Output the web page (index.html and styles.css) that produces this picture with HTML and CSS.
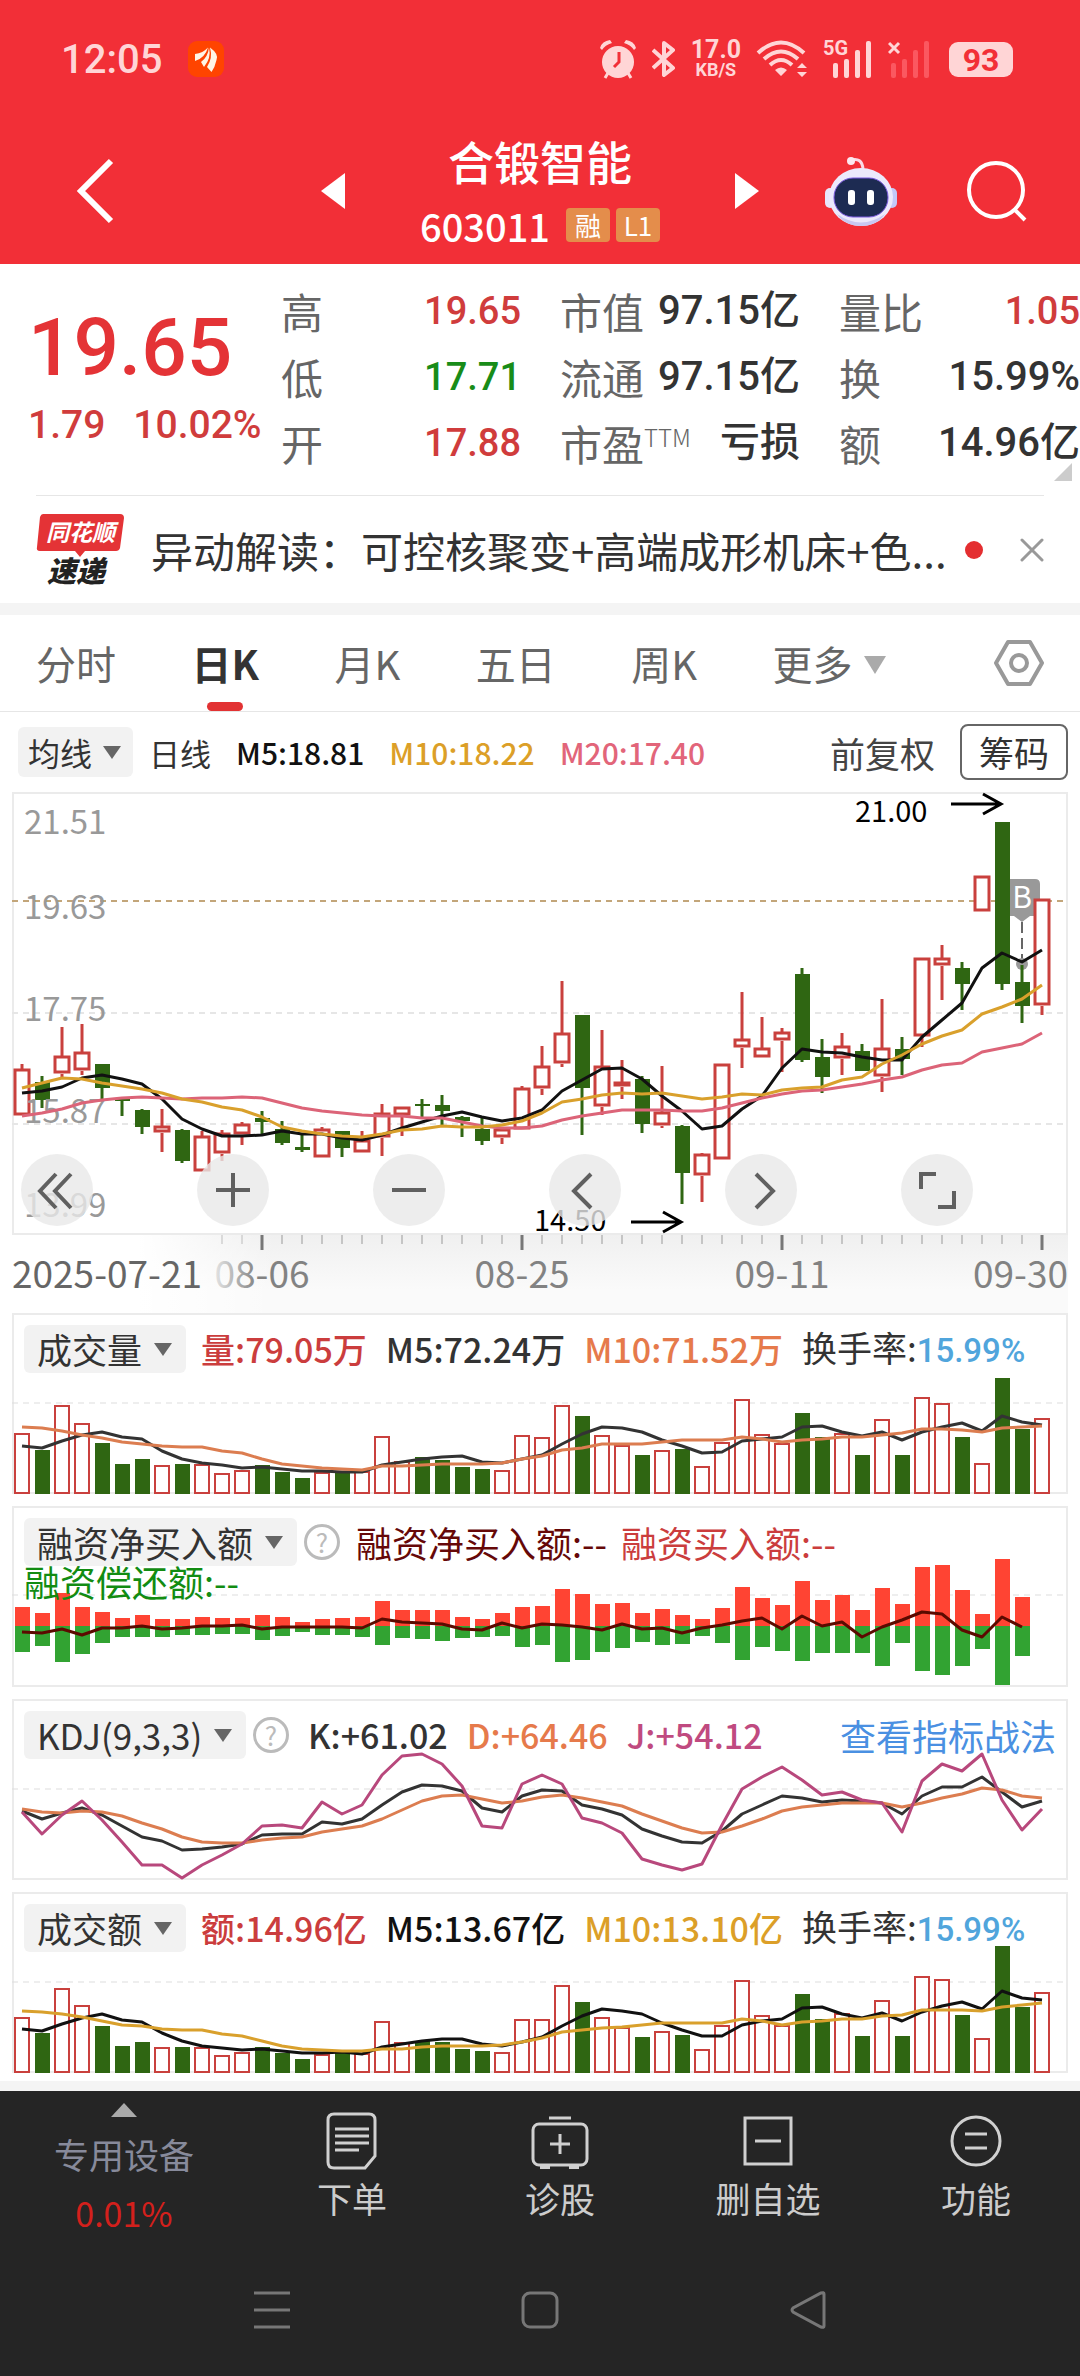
FILE: index.html
```html
<!DOCTYPE html>
<html lang="zh-CN">
<head>
<meta charset="utf-8">
<meta name="viewport" content="width=device-width, initial-scale=1">
<title>合锻智能 603011</title>
<link rel="stylesheet" href="styles.css">
</head>
<body>
<header class="top">
  <div class="status">
    <span class="clock">12:05</span>
    <svg class="app-icon" width="36" height="36" viewBox="0 0 36 36"><rect width="36" height="36" rx="9" fill="#ff4400"/><g fill="#fff6e6"><path d="M7 13Q15 12 20 6.500Q17 17 7 20Z"/><path d="M13 21Q20 16 21 6.500Q23.500 17 16 26Z"/><path d="M19 26Q25 17 22 6.500Q31 13 28.500 19Q27 26 23.500 31Z"/></g></svg>
    <div class="status-right">
      <svg width="38" height="40" viewBox="0 0 38 40" fill="#ffd5d6"><circle cx="19" cy="23" r="16"/><path d="M1 9Q3 2 11 1L13 4Q6 6 3 11ZM37 9Q35 2 27 1L25 4Q32 6 35 11Z"/><path d="M9 34L6 39M29 34L32 39" stroke="#ffd5d6" stroke-width="3"/><path d="M20 13V23L15 28" fill="none" stroke="#f22f37" stroke-width="3"/></svg>
      <svg width="24" height="40" viewBox="0 0 24 40" fill="none" stroke="#ffd5d6" stroke-width="4"><path d="M1 11L21 29L12 36V4L21 11L1 29" stroke-linejoin="round"/></svg>
      <span class="speed"><b>17.0</b><b class="unit">KB/S</b></span>
      <svg width="52" height="40" viewBox="0 0 52 40" fill="none" stroke="#ffd5d6" stroke-width="4"><path d="M2 14Q25-7 48 14M8 20Q25 5 42 20M14 26Q25 16 36 26"/><path d="M25 37L19 31Q25 26 31 31ZM46 24L51 29H41ZM46 38L51 33H41Z" fill="#ffd5d6" stroke="none"/></svg>
      <svg class="signal" width="50" height="40" viewBox="0 0 50 40" fill="#ffd5d6"><text x="0" y="16" class="net">5G</text><rect x="10" y="24" width="5" height="15" rx="2"/><rect x="21" y="20" width="5" height="19" rx="2"/><rect x="32" y="11" width="5" height="28" rx="2"/><rect x="43" y="2" width="5" height="37" rx="2"/></svg>
      <svg width="42" height="40" viewBox="0 0 42 40" fill="#fb5860"><path d="M1 4L11 14M11 4L1 14" stroke="#ffd5d6" stroke-width="3"/><rect x="3" y="24" width="5" height="15" rx="2"/><rect x="14" y="20" width="5" height="19" rx="2"/><rect x="25" y="11" width="5" height="28" rx="2"/><rect x="36" y="2" width="5" height="37" rx="2"/></svg>
      <span class="battery">93</span>
    </div>
  </div>
  <div class="titlebar">
    <button class="icon-btn back" aria-label="返回"><svg width="40" height="66" viewBox="0 0 40 66" fill="none" stroke="#fff" stroke-width="6"><path d="M36 3L6 33L36 63"/></svg></button>
    <button class="icon-btn" aria-label="上一只"><svg width="24" height="36" viewBox="0 0 24 36" fill="#fff"><path d="M24 0V36L0 18Z"/></svg></button>
    <div class="stock">
      <h1>合锻智能</h1>
      <div class="code"><span>603011</span><i class="badge">融</i><i class="badge">L1</i></div>
    </div>
    <button class="icon-btn" aria-label="下一只"><svg width="24" height="36" viewBox="0 0 24 36" fill="#fff"><path d="M0 0V36L24 18Z"/></svg></button>
    <button class="icon-btn" aria-label="智能助手"><svg width="72" height="72" viewBox="0 0 72 72"><path d="M26 5Q37 2 38 14" fill="none" stroke="#fbd9e6" stroke-width="3"/><circle cx="26" cy="6" r="4" fill="#fce8f0"/><rect x="0" y="33" width="10" height="20" rx="5" fill="#e8e6fb"/><rect x="62" y="33" width="10" height="20" rx="5" fill="#c3c8f8"/><ellipse cx="36" cy="42" rx="32" ry="29" fill="#ece9fb"/><path d="M12 59Q36 76 60 59Q52 71 36 71T12 59Z" fill="#c9c8f2"/><rect x="9" y="23" width="54" height="39" rx="19" fill="#1d2b52" stroke="#7c5ae0" stroke-width="1"/><rect x="23" y="35" width="7" height="15" rx="3" fill="#fff"/><rect x="42" y="35" width="7" height="15" rx="3" fill="#fff"/></svg></button>
    <button class="icon-btn search" aria-label="搜索"><svg width="62" height="62" viewBox="0 0 62 62" fill="none" stroke="#fff" stroke-width="4"><circle cx="30" cy="30" r="27"/><path d="M48 49L59 60"/></svg></button>
  </div>
</header>

<main>
  <section class="quote">
    <div class="price">
      <strong>19.65</strong>
      <div class="change"><span>1.79</span><span>10.02%</span></div>
    </div>
    <dl class="stats">
      <div><dt>高</dt><dd class="up">19.65</dd></div>
      <div><dt>低</dt><dd class="down">17.71</dd></div>
      <div><dt>开</dt><dd class="up">17.88</dd></div>
    </dl>
    <dl class="stats">
      <div><dt>市值</dt><dd>97.15亿</dd></div>
      <div><dt>流通</dt><dd>97.15亿</dd></div>
      <div><dt>市盈<small>TTM</small></dt><dd>亏损</dd></div>
    </dl>
    <dl class="stats last">
      <div><dt>量比</dt><dd class="up">1.05</dd></div>
      <div><dt>换</dt><dd>15.99%</dd></div>
      <div><dt>额</dt><dd>14.96亿</dd></div>
    </dl>
  </section>

  <section class="news">
    <svg class="logo" width="90" height="76" viewBox="0 0 90 76"><path d="M7 2H84Q88 2 88 6L84 36Q83 39 80 39H49L44 45L39 39H4Q0 39 1 35L4 5Q5 2 7 2Z" fill="#e43336"/><text x="10" y="29" class="logo-a">同花顺</text><text x="11" y="70" class="logo-b">速递</text></svg>
    <a href="#" class="headline">异动解读：可控核聚变+高端成形机床+色...</a>
    <span class="dot"></span>
    <button class="icon-btn" aria-label="关闭"><svg width="24" height="24" viewBox="0 0 24 24" stroke="#999" stroke-width="3" stroke-linecap="round"><path d="M2 2L22 22M22 2L2 22"/></svg></button>
  </section>

  <nav class="tabs">
    <button>分时</button>
    <button class="active">日K</button>
    <button>月K</button>
    <button>五日</button>
    <button>周K</button>
    <button class="more">更多</button>
    <button class="gear" aria-label="设置"><svg width="50" height="46" viewBox="0 0 50 46" fill="none" stroke="#999" stroke-width="4" stroke-linejoin="round"><path d="M14 2H36L48 23L36 44H14L2 23Z"/><circle cx="25" cy="23" r="8"/></svg></button>
  </nav>

  <div class="ma-row">
    <label class="pill"><select aria-label="主图指标"><option>均线</option></select></label>
    <span class="cycle">日线</span>
    <span class="c-black">M5:18.81</span>
    <span class="c-gold">M10:18.22</span>
    <span class="c-pink">M20:17.40</span>
    <button class="adjust">前复权</button>
    <button class="chips">筹码</button>
  </div>

  <section class="panel main-panel">
    <svg id="kline" class="layer" viewBox="0 0 1056 443"></svg>
    <div class="controls">
      <button aria-label="最左"><svg viewBox="0 0 72 72"><path d="M35 20L19 37L35 54M50 20L34 37L50 54"/></svg></button>
      <button aria-label="放大"><svg viewBox="0 0 72 72"><path d="M19 36H53M36 19V53"/></svg></button>
      <button aria-label="缩小"><svg viewBox="0 0 72 72"><path d="M19 36H53"/></svg></button>
      <button aria-label="左移"><svg viewBox="0 0 72 72"><path d="M42 20L25 37L42 54"/></svg></button>
      <button aria-label="右移"><svg viewBox="0 0 72 72"><path d="M31 20L48 37L31 54"/></svg></button>
      <button aria-label="全屏"><svg viewBox="0 0 72 72"><path d="M20 35V20H35M53 37V53H37"/></svg></button>
    </div>
  </section>
  <svg id="dates" class="dates" viewBox="0 0 1056 78"></svg>

  <section class="panel">
    <svg id="volume" class="layer" viewBox="0 0 1056 181"></svg>
    <div class="legend">
      <label class="pill"><select aria-label="副图一"><option>成交量</option></select></label>
      <span class="c-red">量:79.05万</span>
      <span class="c-dark">M5:72.24万</span>
      <span class="c-orange">M10:71.52万</span>
      <span class="rate">换手率:<b>15.99%</b></span>
    </div>
  </section>

  <section class="panel">
    <svg id="margin" class="layer" viewBox="0 0 1056 181"></svg>
    <div class="legend wrap">
      <label class="pill"><select aria-label="副图二"><option>融资净买入额</option></select></label>
      <button class="help">?</button>
      <span class="c-wine">融资净买入额:--</span>
      <span class="c-red">融资买入额:--</span>
      <span class="c-green">融资偿还额:--</span>
    </div>
  </section>

  <section class="panel">
    <svg id="kdj" class="layer" viewBox="0 0 1056 181"></svg>
    <div class="legend">
      <label class="pill"><select aria-label="副图三"><option>KDJ(9,3,3)</option></select></label>
      <button class="help">?</button>
      <span class="c-dark">K:+61.02</span>
      <span class="c-orange">D:+64.46</span>
      <span class="c-purple">J:+54.12</span>
      <a href="#" class="guide">查看指标战法</a>
    </div>
  </section>

  <section class="panel">
    <svg id="amount" class="layer" viewBox="0 0 1056 181"></svg>
    <div class="legend">
      <label class="pill"><select aria-label="副图四"><option>成交额</option></select></label>
      <span class="c-red">额:14.96亿</span>
      <span class="c-black">M5:13.67亿</span>
      <span class="c-gold">M10:13.10亿</span>
      <span class="rate">换手率:<b>15.99%</b></span>
    </div>
  </section>
</main>

<footer class="bottom">
  <nav class="actions">
    <button class="sector"><i class="tri-up"></i><span>专用设备</span><em>0.01%</em></button>
    <button><svg width="60" height="60" viewBox="0 0 60 60"><path d="M12 3H47Q53 3 53 9V45L43 57H12Q6 57 6 51V9Q6 3 12 3Z"/><path d="M13 18H47M13 25H47M13 32H47M13 39H37"/></svg><span>下单</span></button>
    <button><svg width="60" height="60" viewBox="0 0 60 60"><rect x="3" y="13" width="54" height="41" rx="6"/><path d="M19 7H41M30 23V43M20 33H40"/><path d="M10 56H20M39 56H49" stroke-width="4"/></svg><span>诊股</span></button>
    <button><svg width="60" height="60" viewBox="0 0 60 60"><rect x="7" y="7" width="46" height="46"/><path d="M17 30H43"/></svg><span>删自选</span></button>
    <button><svg width="60" height="60" viewBox="0 0 60 60"><circle cx="30" cy="30" r="24"/><path d="M19 23H41M19 37H41"/></svg><span>功能</span></button>
  </nav>
  <nav class="system">
    <button class="icon-btn" aria-label="最近任务"><svg width="38" height="38" viewBox="0 0 38 38"><path d="M1 2H37M1 19H37M1 36H37"/></svg></button>
    <button class="icon-btn" aria-label="主屏幕"><svg width="38" height="38" viewBox="0 0 38 38"><rect x="2" y="2" width="34" height="34" rx="7"/></svg></button>
    <button class="icon-btn" aria-label="后退"><svg width="38" height="38" viewBox="0 0 38 38"><path d="M35 3V35Q35 37 32 36L4 21Q2 19 4 17L32 2Q35 1 35 3Z"/></svg></button>
  </nav>
</footer>
<script src="chart.js"></script>
</body>
</html>
```

FILE: styles.css
```css
* { box-sizing: border-box; }

body {
  margin: 0;
  background: #fff;
  color: #333;
  font-family: "Noto Sans CJK SC", "Noto Sans", sans-serif;
  font-weight: 400;
}

button {
  margin: 0;
  padding: 0;
  border: 0;
  background: none;
  color: inherit;
  font: inherit;
}

a { text-decoration: none; color: inherit; }
svg { display: block; flex: none; }
h1, dl, dd { margin: 0; }
i, em { font-style: normal; }
.icon-btn { display: flex; align-items: center; justify-content: center; }

/* Status bar and title */
.top { background: #f22f37; color: #fff; height: 264px; }

.status {
  display: flex;
  align-items: center;
  height: 118px;
  padding: 0 67px 0 61px;
  color: #ffd5d6;
  font-family: Roboto, sans-serif;
}
.clock { font-size: 40px; font-weight: 500; margin-right: 26px; }
.status-right { display: flex; align-items: center; gap: 15px; margin-left: auto; }
.speed { display: flex; flex-direction: column; align-items: center; font-size: 25px; line-height: 22px; }
.speed b { font-weight: 700; }
.speed .unit { font-size: 18px; line-height: 18px; }
.signal, .logo { overflow: visible; }
.net { font: 700 20px Roboto, sans-serif; }
.battery {
  width: 64px;
  height: 35px;
  margin-left: 4px;
  border-radius: 9px;
  background: #ffd5d6;
  color: #f22f37;
  font-size: 32px;
  font-weight: 700;
  line-height: 36px;
  text-align: center;
}

.titlebar {
  display: grid;
  grid-template-columns: 265fr 136fr 278fr 136fr 92fr 173fr;
  align-items: center;
  height: 146px;
}
.back { justify-self: start; margin-left: 75px; }
.search { justify-self: start; margin-left: 59px; }
.stock { text-align: center; white-space: nowrap; }
.stock h1 { font-size: 46px; font-weight: 500; line-height: 68px; }
.code { display: flex; align-items: center; justify-content: center; gap: 6px; height: 62px; font-size: 38px; font-weight: 500; }
.code span { margin-right: 10px; }
.badge {
  min-width: 44px;
  border-radius: 4px;
  background: #e48d4b;
  font-size: 26px;
  font-weight: 400;
  line-height: 34px;
  text-align: center;
}

/* Quote summary */
.quote {
  position: relative;
  display: grid;
  grid-template-columns: 281fr 279fr 279fr 241fr;
  height: 231px;
  padding-top: 14px;
}
.quote::after {
  content: "";
  position: absolute;
  right: 8px;
  bottom: 14px;
  border: 9px solid #ccc;
  border-top-color: transparent;
  border-left-color: transparent;
}
.price { padding: 24px 0 0 28px; color: #e43336; font-family: Roboto, sans-serif; white-space: nowrap; }
.price strong { display: block; font-size: 80px; font-weight: 500; line-height: 92px; }
.change { display: flex; gap: 28px; margin-top: 8px; color: #d03c3c; font-size: 39px; font-weight: 500; line-height: 46px; }
.stats { padding-right: 39px; }
.stats.last { padding-right: 0; }
.stats div { display: flex; justify-content: space-between; height: 66px; line-height: 66px; white-space: nowrap; }
.stats dt { color: #666; font-size: 42px; }
.stats dd { font-family: Roboto, "Noto Sans CJK SC", sans-serif; font-size: 40px; font-weight: 500; }
.stats small { font-size: 24px; font-weight: 300; line-height: 24px; vertical-align: 14px; }
.stats .up { color: #d03c3c; font-size: 38px; }
.stats .down { color: #188c18; font-size: 38px; }

/* News line */
.news {
  display: flex;
  align-items: center;
  height: 108px;
  margin: 0 36px;
  border-top: 1px solid #e6e6e6;
}
.headline { flex: 1; margin-left: 25px; font-size: 42px; line-height: 60px; white-space: nowrap; }
.dot { flex: none; width: 18px; height: 18px; margin: 0 37px 0 15px; border-radius: 50%; background: #e42e30; }
.logo-a { font: italic 700 23px "Noto Sans CJK SC", sans-serif; fill: #fff; }
.logo-b { font: italic 900 29px "Noto Sans CJK SC", sans-serif; fill: #222; }

/* Period tabs */
.tabs {
  display: flex;
  align-items: center;
  justify-content: space-between;
  height: 109px;
  padding: 0 36px;
  border-top: 12px solid #f4f4f4;
  border-bottom: 1px solid #e6e6e6;
  color: #666;
  font-size: 40px;
}
.tabs button { position: relative; height: 96px; line-height: 96px; }
.tabs .active { color: #333; font-weight: 700; }
.tabs .active::after {
  content: "";
  position: absolute;
  left: 50%;
  bottom: 0;
  width: 36px;
  height: 9px;
  margin-left: -18px;
  border-radius: 5px;
  background: #e23233;
}
.more::after {
  content: "";
  display: inline-block;
  margin: 0 0 6px 12px;
  border: 11px solid transparent;
  border-top: 18px solid #aaa;
  border-bottom: 0;
}
.tabs .gear { margin-left: 32px; }

/* Moving-average row */
.ma-row {
  display: flex;
  align-items: center;
  height: 80px;
  padding: 0 12px 0 18px;
  gap: 25px;
  font-size: 30px;
  white-space: nowrap;
}
.ma-row span { font-weight: 500; }
.ma-row .cycle { margin-left: -9px; font-size: 31px; font-weight: 400; }
.adjust { margin-left: auto; color: #444; font-size: 35px; }
.chips { width: 108px; height: 56px; border: 2px solid #666; border-radius: 8px; font-size: 35px; line-height: 50px; }

.pill {
  display: flex;
  align-items: center;
  height: 48px;
  padding: 0 14px 0 13px;
  gap: 11px;
  border-radius: 6px;
  background: #f2f2f2;
}
.pill select {
  appearance: none;
  padding: 0;
  border: 0;
  background: none;
  color: #333;
  font: inherit;
  line-height: 48px;
}
.pill::after {
  content: "";
  border: 9px solid transparent;
  border-top: 13px solid #666;
  border-bottom: 0;
}
.ma-row .pill { height: 50px; padding: 0 12px 0 10px; font-size: 32px; gap: 10px; }

/* Chart panels: drawing and legend share one cell */
.panel {
  display: grid;
  margin: 0 12px 12px;
  box-shadow: inset 0 0 0 2px #ebebeb;
}
.main-panel { margin-bottom: 0; }
.panel > * { grid-area: 1 / 1; min-width: 0; }
.layer { width: 100%; height: auto; }
.layer text, .dates text { font-family: "Noto Sans CJK SC", sans-serif; }
.dates { width: calc(100% - 24px); height: auto; margin: 0 12px; background: linear-gradient(90deg, #fff 12%, rgba(255, 255, 255, 0) 25%), linear-gradient(#f0f0f0, #fafafa 70%); }

.controls {
  display: flex;
  justify-content: space-between;
  align-self: end;
  z-index: 1;
  padding: 0 95px 9px 9px;
}
.controls button { width: 72px; height: 72px; border-radius: 50%; background: rgba(232, 232, 232, .8); }
.controls svg { width: 72px; height: 72px; fill: none; stroke: #606060; stroke-width: 4; }

.legend {
  display: flex;
  align-items: center;
  align-self: start;
  z-index: 1;
  padding: 12px 12px 0;
  gap: 19px;
  font-size: 34px;
  line-height: 36px;
  white-space: nowrap;
}
.legend span { font-weight: 500; }
.legend .pill + span { margin-left: -4px; }
.legend .pill select { font-size: 35px; }
.legend.wrap { flex-wrap: wrap; gap: 0 14px; line-height: 30px; }
.legend.wrap span, .legend.wrap select { font-size: 36px; }
.legend.wrap span { font-weight: 400; }
.legend .rate { color: #333; font-size: 35px; font-weight: 400; }
.rate b { color: #50a5dc; font-family: Roboto, sans-serif; font-size: 33px; font-weight: 500; }
.help { width: 36px; height: 36px; margin-left: -12px; border: 3px solid #bbb; border-radius: 50%; color: #bbb; font-size: 26px; line-height: 30px; }
.wrap .help { margin: 0 2px 0 -7px; }
.guide { margin-left: auto; color: #4a90e2; font-size: 36px; }

.c-black { color: #111; }
.c-dark { color: #333; }
.c-gold { color: #dc9f28; }
.c-pink { color: #e2657a; }
.c-red { color: #cb3d3d; }
.c-orange { color: #e67a4b; }
.c-wine { color: #660808; }
.c-green { color: #128c12; }
.c-purple { color: #c04a80; }

/* Bottom bar */
.bottom { min-height: 295px; margin-top: -4px; border-top: 10px solid #f4f4f4; background: #252525; color: #ccc; }
.actions { display: grid; grid-template-columns: 248fr 208fr 208fr 208fr 208fr; height: 170px; }
.actions button { display: flex; flex-direction: column; align-items: center; padding-top: 20px; gap: 5px; font-size: 35px; line-height: 44px; }
.actions svg { fill: none; stroke: #d0d0d0; stroke-width: 3; }
.actions .sector { padding-top: 12px; gap: 15px; color: #878a9b; }
.tri-up { border: 13px solid transparent; border-bottom: 14px solid #aaa; border-top: 0; }
.sector em { color: #d3201c; font-size: 34px; }
.system { display: flex; justify-content: center; gap: 230px; padding-top: 30px; }
.system svg { fill: none; stroke: #777; stroke-width: 3; }
```

FILE: chart.js
```js
const NS = "http://www.w3.org/2000/svg";
const RED = "#c9403d", GREEN = "#2f6612";
const x = i => 10 + 20 * i;

function add(svg, name, attrs, text) {
  const el = document.createElementNS(NS, name);
  for (const key in attrs) el.setAttribute(key, attrs[key]);
  if (text) el.textContent = text;
  svg.appendChild(el);
}
const line = (svg, ys, color) => add(svg, "polyline", {
  points: ys.map((y, i) => x(i) + "," + y).join(" "), fill: "none", stroke: color, "stroke-width": 3, "stroke-linejoin": "round"
});
const grid = (svg, y, color = "#ddd", width = 1) => add(svg, "path", {
  d: `M0 ${y}H1052`, stroke: color, "stroke-width": width, "stroke-dasharray": "6 5"
});
const label = (svg, px, py, size, fill, text, anchor = "start") => add(svg, "text", {
  x: px, y: py, "font-size": size, fill, "text-anchor": anchor
}, text);

// One letter per trading day: r closes up, g closes down
const days = "rgrrgggrgrrrgggrgrrrggggrrrrgrrgrgrrrrrggrgrgrrgrggr".split("");

// high, body top, body bottom, low
const candles = [
  [272,277,324,324],[284,290,308,316],[235,264,282,285],[232,260,279,283],[272,272,296,307],[305,307,309,324],
  [317,318,335,342],[317,334,341,360],[337,338,369,371],[339,344,380,380],[338,341,362,369],[330,332,343,353],
  [319,326,330,344],[329,337,351,353],[341,355,358,360],[335,337,366,366],[339,339,356,365],[339,348,361,361],
  [312,321,346,364],[315,315,324,344],[307,312,314,325],[303,313,319,334],[324,325,329,345],[326,337,349,353],
  [336,337,346,352],[294,296,338,338],[254,274,297,303],[189,241,272,275],[223,223,296,343],[238,274,315,323],
  [268,290,295,307],[284,287,332,341],[274,320,334,336],[333,334,381,412],[361,362,384,410],[272,272,368,368],
  [200,247,256,276],[225,256,266,266],[236,240,249,280],[176,182,268,270],[247,265,285,301],[241,254,267,283],
  [252,259,279,279],[207,256,285,300],[245,257,267,283],[166,166,245,255],[153,166,174,208],[170,176,192,218],
  [84,84,120,120],[30,30,192,198],[173,190,214,231],[107,107,214,223]
];

const k = document.getElementById("kline");
grid(k, 221, "#e6e6e6", 2);
grid(k, 332, "#e6e6e6", 2);
grid(k, 109, "#c3a67a", 2);
add(k, "path", { d: "M1001 87H1023Q1028 87 1028 92V124H1018L1010 130L1002 124H997V87Z", fill: "#999" });
label(k, 1010, 116, 30, "#fff", "B", "middle");
add(k, "path", { d: "M1010 130V168", stroke: "#666", "stroke-width": 2, "stroke-dasharray": "11 5" });
add(k, "circle", { cx: 1010, cy: 172, r: 6, fill: "#999" });
candles.forEach(([high, top, bottom, low], i) => {
  const up = days[i] === "r", color = up ? RED : GREEN;
  add(k, "path", { d: `M${x(i)} ${high}V${top}M${x(i)} ${bottom}V${low}`, stroke: color, "stroke-width": 3 });
  if (up) add(k, "rect", { x: x(i) - 7, y: top + 1, width: 14, height: Math.max(2, bottom - top - 3), fill: "#fff", stroke: color, "stroke-width": 3 });
  else add(k, "rect", { x: x(i) - 7, y: top, width: 15, height: bottom - top, fill: color });
});
[["21.51", 42], ["19.63", 127], ["17.75", 229], ["15.87", 331], ["13.99", 425]].forEach(([t, y]) => label(k, 12, y, 33, "#999", t));
line(k, [301,299,295,286,283,287,292,307,327,337,344,344,343,339,342,342,346,348,343,336,330,324,320,325,329,326,318,299,288,277,276,287,304,319,337,334,317,304,276,257,260,261,265,268,268,245,228,211,176,161,170,158], "#111");
line(k, [324,321,317,311,308,306,305,306,307,306,306,305,306,311,316,319,321,323,324,324,326,326,330,334,336,336,334,328,324,321,318,318,318,319,319,316,311,306,302,299,298,295,292,288,285,278,273,271,260,256,252,241], "#dc6478");
line(k, [296,291,286,287,291,294,297,301,307,310,315,318,325,335,339,342,344,345,342,338,337,334,335,335,333,329,321,310,307,303,301,302,301,304,307,305,302,303,298,296,295,288,285,272,263,252,244,238,222,215,207,193], "#d9a02c");
label(k, 843, 30, 29, "#000", "21.00");
label(k, 522, 439, 29, "#000", "14.50");
add(k, "path", { d: "M939 12H988M971 2L989 12L971 22M619 430H668M651 420L669 430L651 440", fill: "none", stroke: "#000", "stroke-width": 3 });

// Date axis, fading out behind the pinned start date
const d = document.getElementById("dates");
for (let i = 10; i < 52; i++) {
  const major = i % 13 === 12;
  add(d, "path", { d: `M${x(i)} 0V${major ? 15 : 9}`, stroke: major ? "#777" : "#999", "stroke-width": major ? 3 : 1, opacity: i < 12 ? .6 : 1 });
}
label(d, 0, 53, 37, "#666", "2025-07-21");
const fade = document.createElementNS(NS, "linearGradient");
fade.id = "fade";
d.appendChild(fade);
add(fade, "stop", { offset: 0, "stop-color": "#e4e4e4" });
add(fade, "stop", { offset: .45, "stop-color": "#828282" });
label(d, 250, 53, 37, "url(#fade)", "08-06", "middle");
label(d, 510, 53, 37, "#828282", "08-25", "middle");
label(d, 770, 53, 37, "#828282", "09-11", "middle");
label(d, 1056, 53, 37, "#828282", "09-30", "end");

function bars(id, heights, ma5, ma10, dark, warm) {
  const svg = document.getElementById(id);
  grid(svg, 90);
  heights.forEach((h, i) => {
    if (days[i] === "r") add(svg, "rect", { x: x(i) - 7, y: 182 - h, width: 14, height: h - 2, fill: "#fff", stroke: RED, "stroke-width": 2 });
    else add(svg, "rect", { x: x(i) - 7, y: 181 - h, width: 15, height: h, fill: GREEN });
  });
  line(svg, ma5, dark);
  line(svg, ma10, warm);
}
bars("volume",
  [61,44,89,71,51,30,35,29,30,30,21,24,29,22,16,22,23,23,58,33,37,34,27,25,24,59,57,89,78,59,49,39,44,45,28,52,95,60,51,81,57,61,39,75,39,97,91,57,31,116,65,76],
  [133,135,128,122,119,124,126,138,146,150,152,155,154,156,158,158,159,159,152,149,146,144,143,149,150,146,142,131,121,114,115,119,127,133,140,139,128,126,124,114,113,119,123,119,127,119,114,110,118,103,109,112],
  [114,115,118,122,125,129,131,133,134,134,138,140,146,151,153,155,156,157,153,153,152,151,151,151,150,146,143,137,135,131,131,131,129,127,127,127,124,126,129,127,126,124,124,122,120,116,116,117,119,115,114,113],
  "#333", "#dc7d50");
bars("amount",
  [56,40,85,68,47,27,31,26,26,26,18,21,26,20,14,19,20,20,52,31,32,31,24,22,21,54,54,88,71,56,46,36,42,38,24,48,93,58,48,79,54,60,37,73,37,97,94,58,35,127,66,81],
  [137,139,132,126,122,128,130,141,149,154,156,158,157,159,161,161,160,162,155,152,149,147,147,152,154,150,145,134,124,117,119,122,131,138,144,144,133,129,127,116,115,122,126,121,129,120,114,110,117,99,106,108],
  [119,120,122,125,129,133,134,137,138,138,142,144,149,154,157,158,159,159,157,157,155,154,154,154,153,150,146,140,138,136,135,133,131,131,131,131,127,129,133,130,129,127,127,124,123,118,118,118,119,115,113,111],
  "#111", "#d9a02c");

const m = document.getElementById("margin");
grid(m, 89);
const bought = [19,13,33,19,14,8,11,7,7,9,8,8,11,9,4,7,8,9,25,16,16,16,9,7,13,19,20,37,32,22,23,13,17,11,7,18,39,28,21,45,26,31,16,38,22,59,61,36,12,67,29];
const repaid = [26,20,36,28,17,11,11,11,9,9,8,8,14,10,6,9,9,11,19,12,13,15,12,11,10,21,19,36,34,26,22,16,19,18,10,17,34,21,25,35,27,27,27,40,17,45,49,40,23,59,30];
bought.forEach((h, i) => {
  add(m, "rect", { x: x(i) - 7, y: 120 - h, width: 15, height: h, fill: "#ff4433" });
  add(m, "rect", { x: x(i) - 7, y: 120, width: 15, height: repaid[i], fill: "#32a332" });
});
line(m, [126,127,123,129,122,122,120,123,122,120,120,119,123,121,121,121,121,122,113,116,117,118,123,124,117,122,118,119,121,124,118,123,122,127,122,119,115,112,123,110,120,116,131,121,114,106,108,124,131,111,121], "#5c0a00");

const j = document.getElementById("kdj");
grid(j, 90);
line(j, [112,120,114,109,116,127,138,142,151,150,148,145,136,135,135,123,125,120,106,93,86,87,92,109,113,97,91,92,106,110,116,130,137,143,144,132,115,106,97,99,103,101,102,104,115,97,88,88,78,93,108,102], "#333");
line(j, [110,113,114,112,113,117,124,130,138,143,144,144,141,139,138,133,130,127,120,111,102,97,96,100,104,102,98,96,99,103,107,115,122,129,134,133,127,120,112,108,106,104,104,104,108,104,99,95,89,91,97,99], "#dc7d50");
line(j, [113,135,116,102,121,143,166,166,179,166,156,145,127,126,129,103,115,106,76,57,55,65,87,127,129,85,76,85,119,124,134,160,166,171,165,126,90,78,68,81,96,93,101,104,133,82,65,72,55,101,131,110], "#b8487c");
```
